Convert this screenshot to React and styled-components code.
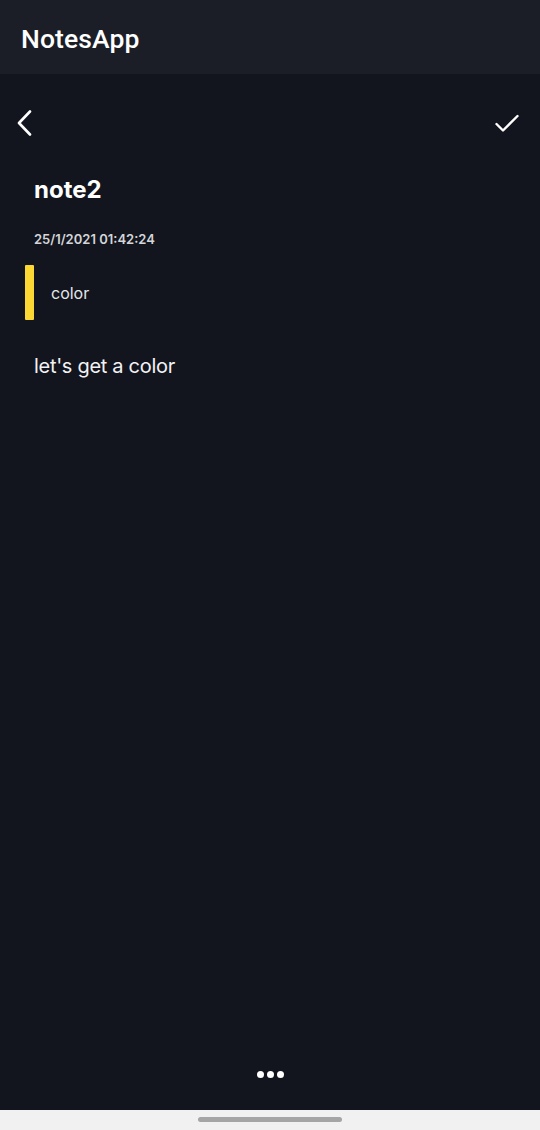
import React from "react";
import styled, { createGlobalStyle } from "styled-components";

const Global = createGlobalStyle`
  html, body { margin: 0; padding: 0; background: #12151e; }
  body { font-family: Inter, "Noto Sans", sans-serif; }
  #root { height: 1130px; }
`;

const Screen = styled.div`
  width: 540px;
  height: 1130px;
  display: flex;
  flex-direction: column;
  background: #12151e;
  overflow: hidden;
`;

const AppBar = styled.header`
  height: 74px;
  flex: none;
  display: flex;
  align-items: center;
  padding: 0 21px;
  background: #1b1e27;
  box-sizing: border-box;
`;

const AppTitle = styled.h1`
  margin: 0;
  color: #ffffff;
  font-family: Roboto, "Noto Sans", sans-serif;
  font-weight: 500;
  font-size: 26.5px;
  letter-spacing: 0.1px;
  padding-top: 2px;
`;

const Content = styled.main`
  flex: 1;
  display: flex;
  flex-direction: column;
`;

const Toolbar = styled.div`
  display: flex;
  justify-content: space-between;
  align-items: center;
  padding: 36px 20px 0 12px;
  height: 26px;
`;

const IconButton = styled.button`
  background: none;
  border: none;
  padding: 0;
  display: flex;
  color: #fff;
`;

const Title = styled.h2`
  margin: 40px 0 0 34px;
  color: #fff;
  font-weight: 700;
  font-size: 24px;
  line-height: 28px;
`;

const DateText = styled.div`
  margin: 27px 0 0 34px;
  color: #d4d5d8;
  font-weight: 600;
  font-size: 13px;
  line-height: 16px;
`;

const Category = styled.div`
  margin: 18px 0 0 25px;
  display: flex;
  align-items: center;
  gap: 17px;
  height: 55px;
`;

const ColorBar = styled.div`
  width: 9px;
  align-self: stretch;
  background: ${(p) => p.$color};
  border-radius: 1px;
`;

const CategoryLabel = styled.span`
  color: #e6e7ea;
  font-size: 16px;
`;

const Body = styled.p`
  margin: 32px 0 0 34px;
  color: #f2f2f4;
  font-size: 20px;
  line-height: 28px;
  letter-spacing: -0.3px;
`;

const Footer = styled.div`
  margin-top: auto;
  display: flex;
  justify-content: center;
  gap: 3px;
  padding-bottom: 32px;
`;

const Dot = styled.span`
  width: 7px;
  height: 7px;
  border-radius: 50%;
  background: #fff;
`;

const NavBar = styled.div`
  height: 20px;
  flex: none;
  background: #f1f1f1;
  display: flex;
  justify-content: center;
  padding-top: 7px;
  box-sizing: border-box;
`;

const Handle = styled.div`
  width: 144px;
  height: 5px;
  border-radius: 3px;
  background: #a5a5a5;
`;

export default function App() {
  return (
    <>
      <Global />
      <Screen>
        <AppBar>
          <AppTitle>NotesApp</AppTitle>
        </AppBar>
        <Content>
          <Toolbar>
            <IconButton aria-label="back">
              <svg width="26" height="26" viewBox="0 0 26 26" fill="none" stroke="#fff" strokeWidth="2.6" strokeLinecap="round" strokeLinejoin="round">
                <path d="M18 1.5 L7 13 L18 24.5" />
              </svg>
            </IconButton>
            <IconButton aria-label="save">
              <svg width="26" height="26" viewBox="0 0 26 26" fill="none" stroke="#fff" strokeWidth="2.4" strokeLinecap="round" strokeLinejoin="round">
                <path d="M2.5 14 L9 20.5 L23.5 6" />
              </svg>
            </IconButton>
          </Toolbar>
          <Title>note2</Title>
          <DateText>25/1/2021 01:42:24</DateText>
          <Category>
            <ColorBar $color="#fdd835" />
            <CategoryLabel>color</CategoryLabel>
          </Category>
          <Body>let's get a color</Body>
          <Footer>
            <Dot />
            <Dot />
            <Dot />
          </Footer>
        </Content>
        <NavBar>
          <Handle />
        </NavBar>
      </Screen>
    </>
  );
}
